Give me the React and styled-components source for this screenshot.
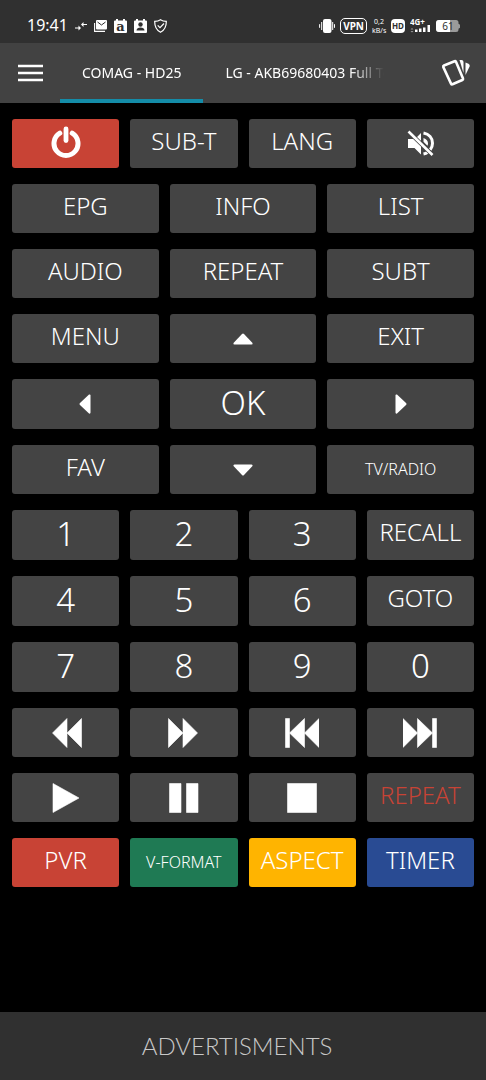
import React, { useState } from 'react';
import styled, { createGlobalStyle, css } from 'styled-components';

const GlobalStyle = createGlobalStyle`
    * {
        box-sizing: border-box;
    }
    body {
        margin: 0;
        background: #000000;
        color: #ffffff;
        font-family: "Noto Sans", "Open Sans", sans-serif;
    }
`;

const Page = styled.div`
    min-height: 100vh;
    display: flex;
    flex-direction: column;
`;

const StatusBar = styled.div`
    height: 43px;
    padding: 8px 26px 0 27px;
    display: flex;
    align-items: center;
    justify-content: space-between;
    background: #303030;
`;

const StatusGroup = styled.div`
    display: flex;
    align-items: center;
    gap: ${(props) => props.$gap}px;
`;

const Clock = styled.span`
    padding-bottom: 2px;
    font-size: 16px;
    line-height: 20px;
`;

const VpnBadge = styled.span`
    height: 16px;
    padding: 0 2px;
    border: 1px solid #ffffff;
    border-radius: 5px;
    font: 700 10px/14px "Noto Sans", sans-serif;
`;

const Speed = styled.span`
    width: 14px;
    text-align: center;
    font: 400 7px/9px "Noto Sans", sans-serif;
    white-space: nowrap;
`;

const AppBar = styled.header`
    height: 60px;
    display: flex;
    align-items: stretch;
    background: #424242;
`;

const IconButton = styled.button`
    width: 60px;
    padding: 0;
    border: 0;
    background: none;
    color: #ffffff;
    display: flex;
    align-items: center;
    justify-content: center;
`;

const Tabs = styled.nav`
    flex: 1;
    min-width: 0;
    display: flex;
    overflow: hidden;
    mask-image: linear-gradient(to left, transparent 42px, #000000 76px);
`;

const Tab = styled.button`
    flex: none;
    padding: 0 22px;
    border: 0;
    border-top: 4px solid transparent;
    border-bottom: 4px solid ${(props) => (props.$active ? '#148ca8' : 'transparent')};
    background: none;
    color: #ffffff;
    font: 400 14px/20px "Noto Sans", sans-serif;
    white-space: nowrap;
`;

const Remote = styled.main`
    padding: 16px 12px;
    display: flex;
    flex-direction: column;
    gap: 16px;
`;

const KeyRow = styled.div`
    display: flex;
    gap: 11px;
`;

const tones = {
    gray: '#444444',
    red: '#c84335',
    green: '#1f7a54',
    yellow: '#ffb400',
    blue: '#294b93'
};

const fontSizes = {
    small: css`font-size: 16px;`,
    normal: css`font-size: 24px;`,
    large: css`font-size: 33px;`
};

const Key = styled.button`
    flex: 1 1 0;
    min-width: 0;
    height: ${(props) => (props.$tall ? 50 : 49)}px;
    padding: 0 0 ${(props) => (props.$size === 'normal' ? 6 : 2)}px;
    border: 0;
    border-radius: 3px;
    background: ${(props) => tones[props.$tone]};
    color: ${(props) => (props.$redText ? '#c84335' : '#ffffff')};
    font-family: "Noto Sans", "Open Sans", sans-serif;
    font-weight: 300;
    line-height: 40px;
    white-space: nowrap;
    display: flex;
    align-items: center;
    justify-content: center;
    ${(props) => fontSizes[props.$size]}

    svg {
        margin-top: 6px;
    }
`;

const Footer = styled.footer`
    height: 68px;
    margin-top: auto;
    padding-right: 12px;
    display: flex;
    align-items: center;
    justify-content: center;
    background: #303030;
    color: #c8c8c8;
    font: 300 24px/36px Lato, sans-serif;
`;

// Status bar icons
const ArrowsIcon = () => (
    <svg width="12" height="12" viewBox="0 0 12 12" fill="#ffffff" stroke="#ffffff">
        <path d="M0 8h5M7 4.500h5" strokeWidth="1.200" />
        <path d="M3.500 5.500v5L6 8zM8.500 2v5L6 4.500z" stroke="none" />
    </svg>
);

const MailIcon = () => (
    <svg width="13" height="12" viewBox="0 0 13 12">
        <path d="M.6 3v8.400h10.400" fill="none" stroke="#ffffff" strokeWidth="1.100" />
        <rect x="2" y="0" width="11" height="9.500" rx="1" fill="#ffffff" />
        <path d="M3.500 2l4 3 4-3" fill="none" stroke="#303030" strokeWidth="1" />
    </svg>
);

const LetterIcon = () => (
    <svg width="13" height="14" viewBox="0 0 13 14">
        <path d="M0 2.500q0-1 1-1h1V0h2v1.500h5V0h2v1.500h1q1 0 1 1V13q0 1-1 1H1q-1 0-1-1z" fill="#ffffff" />
        <text x="6.500" y="11.500" textAnchor="middle" fill="#303030" fontFamily="DejaVu Serif, serif" fontWeight="700" fontSize="13">a</text>
    </svg>
);

const ContactIcon = () => (
    <svg width="13" height="14" viewBox="0 0 13 14">
        <path d="M0 2.500q0-1 1-1h1V0h2v1.500h5V0h2v1.500h1q1 0 1 1V13q0 1-1 1H1q-1 0-1-1z" fill="#ffffff" />
        <circle cx="6.500" cy="5.500" r="2.200" fill="#303030" />
        <path d="M2.500 11.500c0-2 1.800-3 4-3s4 1 4 3z" fill="#303030" />
    </svg>
);

const ShieldIcon = () => (
    <svg width="13" height="14" viewBox="0 0 13 14" fill="none" stroke="#ffffff" strokeWidth="1.200">
        <path d="M6.500.7C4.800 1.800 3 2.300.7 2.400.6 7.500 2 11 6.500 13.300 11 11 12.400 7.500 12.300 2.400 10 2.300 8.200 1.800 6.500.7z" />
        <path d="M3.700 6.300l2.300 2.400L10 4.500" />
    </svg>
);

const VibrateIcon = () => (
    <svg width="16" height="14" viewBox="0 0 16 14">
        <rect x="4" y="0" width="8.500" height="14" rx="2" fill="#ffffff" />
        <path d="M2.700 3v8M.6 5.200v3.600M13.700 3v8M15.500 5.200v3.600" stroke="#ffffff" strokeWidth="1" />
    </svg>
);

const HdIcon = () => (
    <svg width="14" height="14" viewBox="0 0 14 14">
        <rect width="14" height="14" rx="4" fill="#ffffff" />
        <text x="7" y="10" textAnchor="middle" fill="#303030" fontFamily="Noto Sans, sans-serif" fontWeight="700" fontSize="8">HD</text>
    </svg>
);

const SignalIcon = () => (
    <svg width="21" height="20" viewBox="0 0 21 20" fill="#ffffff">
        <text x="0" y="9" fontFamily="Noto Sans, sans-serif" fontWeight="700" fontSize="8">4G+</text>
        <path d="M.5 13.500L2 12l1.500 1.500zM.5 15L2 16.500 3.500 15z" opacity=".5" />
        <path d="M5 13.500h2.500V16H5zM9 12.500h2.500V16H9zM13 11.500h2.500V16H13zM17.500 9h2.500v7h-2.500z" />
    </svg>
);

const BatteryIcon = () => (
    <svg width="24" height="12" viewBox="0 0 24 12">
        <path d="M3 0h17q2.500 0 2.500 2.500v1.200l1.500 1v3l-1.500 1v.8q0 2.500-2.500 2.500H3q-3 0-3-3V3q0-3 3-3z" fill="#9a9a9a" />
        <path d="M3 0h11v12H3q-3 0-3-3V3q0-3 3-3z" fill="#ffffff" />
        <text x="12" y="9.500" textAnchor="middle" fill="#303030" fontFamily="Noto Sans, sans-serif" fontSize="10">61</text>
    </svg>
);

// App bar icons
const MenuIcon = () => (
    <svg width="25" height="18" viewBox="0 0 25 18" stroke="#ffffff" strokeWidth="2.700">
        <path d="M0 2h25M0 9h25M0 16h25" />
    </svg>
);

const RemotesIcon = () => (
    <svg width="30" height="28" viewBox="0 0 30 28">
        <path d="M3 6.500L13.500 2.200Q14.500 1.900 15 2.800L22 19.500Q22.300 20.500 21.300 21L11.500 25.300Q10.500 25.600 10 24.600L2.300 8Q2 7 3 6.500z" fill="none" stroke="#ffffff" strokeWidth="2.600" />
        <path d="M18.500 1h2q2 .2 2 2v11z" fill="#ffffff" />
        <path d="M24.500 3.500l3 1.300q1.800.9 1.100 2.700L24.500 16z" fill="#ffffff" />
    </svg>
);

// Key icons
const PowerIcon = () => (
    <svg width="30" height="36" viewBox="0 0 30 36" fill="none" stroke="#ffffff" strokeLinecap="round">
        <path d="M8.800 7.200a12 12 0 1 0 12.400 0" strokeWidth="5" />
        <path d="M15 3v11.500" strokeWidth="4.800" />
    </svg>
);

const MuteIcon = () => (
    <svg width="27" height="27" viewBox="0 0 27 27">
        <path d="M1 9h5.500L14 16v8.500L7.500 18H1zM9.500 7.500L14 3v8.500z" fill="#ffffff" />
        <path d="M16.500 3c5.500 1 9 5 9 10.200 0 2.600-.9 4.900-2.300 6.700M16.500 24c1.500-.3 3-.9 4.200-1.800" fill="none" stroke="#ffffff" strokeWidth="3" />
        <path d="M16.500 8c3 1 4.500 3 4.500 5.300 0 .9-.2 1.800-.6 2.500l-3.900-4z" fill="#ffffff" />
        <path d="M1.500 1.500L25.500 25" stroke="#444444" strokeWidth="4" />
        <path d="M1.500 1.500L25.500 25" stroke="#ffffff" strokeWidth="2.600" />
    </svg>
);

const triangles = {
    up: 'M10 0.500Q10.500 0.500 11 1L19.500 10Q20 11.500 18.500 11.500H1.500Q0 11.500.5 10L9 1Q9.500.5 10 .5z',
    down: 'M10 11.500Q10.500 11.500 11 11L19.500 2Q20 .5 18.500 .5H1.500Q0 .5 .5 2L9 11Q9.500 11.500 10 11.500z',
    left: 'M.5 10Q.5 9.500 1 9L10 .5Q11.500 0 11.500 1.500V18.500Q11.500 20 10 19.500L1 11Q.5 10.500 .5 10z',
    right: 'M11.500 10Q11.500 9.500 11 9L2 .5Q.5 0 .5 1.500V18.500Q.5 20 2 19.500L11 11Q11.500 10.500 11.500 10z'
};

const ArrowIcon = ({ direction }) => {
    const vertical = direction === 'up' || direction === 'down';
    const width = vertical ? 20 : 12;
    const height = vertical ? 12 : 20;

    return (
        <svg width={width} height={height} viewBox={`0 0 ${width} ${height}`} fill="#ffffff">
            <path d={triangles[direction]} />
        </svg>
    );
};

const mediaPaths = {
    rewind: 'M3.500 15L18 .5v29zM18 15L32.500.5v29z',
    forward: 'M1.500.5L16 15 1.500 29.500zM16 .5L30.500 15 16 29.500z',
    previous: 'M.5 .5h4V15L19.500.5V15L34 .5v29L19.500 15v14.500L4.500 15v14.500h-4z',
    next: 'M33.500 .5h-4V15L14.500.5V15L0 .5v29L14.500 15v14.500L29.500 15v14.500h4z',
    play: 'M4 .5L30 15 4 29.500z',
    pause: 'M2.500.5h11.500v29H2.500zM19.500.5h11.500v29H19.500z',
    stop: 'M2.500.5h29v29h-29z'
};

const MediaIcon = ({ name }) => (
    <svg width="34" height="30" viewBox="0 0 34 30" fill="#ffffff" stroke="#ffffff" strokeWidth=".6" strokeLinejoin="round">
        <path d={mediaPaths[name]} />
    </svg>
);

const rows = [
    {
        keys: [
            { label: 'Power', icon: <PowerIcon />, tone: 'red' },
            { label: 'SUB-T' },
            { label: 'LANG' },
            { label: 'Mute', icon: <MuteIcon /> }
        ]
    },
    { keys: [{ label: 'EPG' }, { label: 'INFO' }, { label: 'LIST' }] },
    { keys: [{ label: 'AUDIO' }, { label: 'REPEAT' }, { label: 'SUBT' }] },
    { keys: [{ label: 'MENU' }, { label: 'Up', icon: <ArrowIcon direction="up" /> }, { label: 'EXIT' }] },
    {
        tall: true,
        keys: [
            { label: 'Left', icon: <ArrowIcon direction="left" /> },
            { label: 'OK', size: 'large' },
            { label: 'Right', icon: <ArrowIcon direction="right" /> }
        ]
    },
    {
        keys: [
            { label: 'FAV' },
            { label: 'Down', icon: <ArrowIcon direction="down" /> },
            { label: 'TV/RADIO', size: 'small' }
        ]
    },
    {
        tall: true,
        keys: [
            { label: '1', size: 'large' },
            { label: '2', size: 'large' },
            { label: '3', size: 'large' },
            { label: 'RECALL' }
        ]
    },
    {
        tall: true,
        keys: [
            { label: '4', size: 'large' },
            { label: '5', size: 'large' },
            { label: '6', size: 'large' },
            { label: 'GOTO' }
        ]
    },
    {
        tall: true,
        keys: [
            { label: '7', size: 'large' },
            { label: '8', size: 'large' },
            { label: '9', size: 'large' },
            { label: '0', size: 'large' }
        ]
    },
    {
        keys: [
            { label: 'Rewind', icon: <MediaIcon name="rewind" /> },
            { label: 'Fast forward', icon: <MediaIcon name="forward" /> },
            { label: 'Previous', icon: <MediaIcon name="previous" /> },
            { label: 'Next', icon: <MediaIcon name="next" /> }
        ]
    },
    {
        keys: [
            { label: 'Play', icon: <MediaIcon name="play" /> },
            { label: 'Pause', icon: <MediaIcon name="pause" /> },
            { label: 'Stop', icon: <MediaIcon name="stop" /> },
            { label: 'REPEAT', redText: true }
        ]
    },
    {
        keys: [
            { label: 'PVR', tone: 'red' },
            { label: 'V-FORMAT', tone: 'green', size: 'small' },
            { label: 'ASPECT', tone: 'yellow' },
            { label: 'TIMER', tone: 'blue' }
        ]
    }
];

const remotes = ['COMAG - HD25', 'LG - AKB69680403 Full Text'];

const App = () => {
    const [activeTab, setActiveTab] = useState(0);

    return (
        <Page>
            <GlobalStyle />
            <StatusBar>
                <StatusGroup $gap={7}>
                    <Clock>19:41</Clock>
                    <ArrowsIcon />
                    <MailIcon />
                    <LetterIcon />
                    <ContactIcon />
                    <ShieldIcon />
                </StatusGroup>
                <StatusGroup $gap={5}>
                    <VibrateIcon />
                    <VpnBadge>VPN</VpnBadge>
                    <Speed>0,2<br />kB/s</Speed>
                    <HdIcon />
                    <SignalIcon />
                    <BatteryIcon />
                </StatusGroup>
            </StatusBar>
            <AppBar>
                <IconButton aria-label="Menu">
                    <MenuIcon />
                </IconButton>
                <Tabs>
                    {remotes.map((name, index) => (
                        <Tab key={name} $active={index === activeTab} onClick={() => setActiveTab(index)}>
                            {name}
                        </Tab>
                    ))}
                </Tabs>
                <IconButton aria-label="My remotes">
                    <RemotesIcon />
                </IconButton>
            </AppBar>
            <Remote>
                {rows.map((row, index) => (
                    <KeyRow key={index}>
                        {row.keys.map((key) => (
                            <Key
                                key={key.label}
                                aria-label={key.label}
                                $tall={row.tall}
                                $tone={key.tone || 'gray'}
                                $size={key.size || 'normal'}
                                $redText={key.redText}
                            >
                                {key.icon || key.label}
                            </Key>
                        ))}
                    </KeyRow>
                ))}
            </Remote>
            <Footer>ADVERTISMENTS</Footer>
        </Page>
    );
};

export default App;
